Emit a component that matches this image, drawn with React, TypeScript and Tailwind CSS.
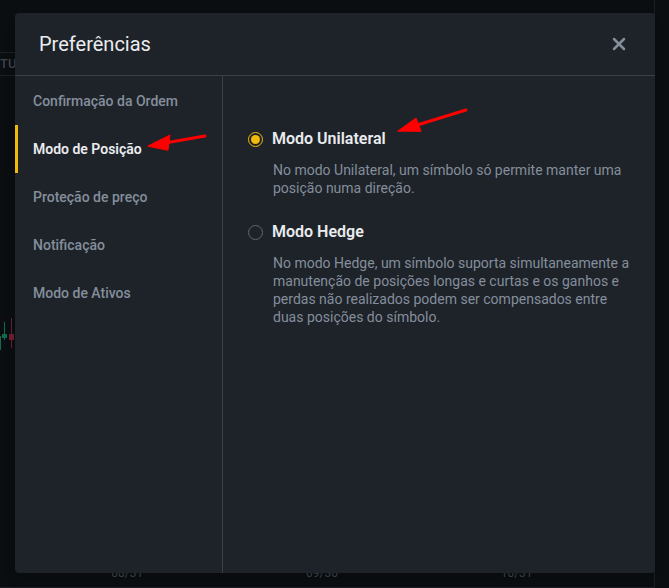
import { X } from "lucide-react";

const menu = [
  "Confirmação da Ordem",
  "Modo de Posição",
  "Proteção de preço",
  "Notificação",
  "Modo de Ativos",
];

function Radio({ checked }: { checked: boolean }) {
  return (
    <span
      className={`flex h-[15px] w-[15px] shrink-0 items-center justify-center rounded-full border-[1.5px] ${
        checked ? "border-[#f0b90b]" : "border-[#5e6673]"
      }`}
    >
      {checked && <span className="h-[9px] w-[9px] rounded-full bg-[#f0b90b]" />}
    </span>
  );
}

function Option({ checked, title, text }: { checked: boolean; title: string; text: string }) {
  return (
    <div>
      <div className="flex items-center gap-[9px]">
        <Radio checked={checked} />
        <span className="text-[16px] font-semibold text-[#eaecef]">{title}</span>
      </div>
      <p className="mt-[10px] pl-[25px] text-[14px] leading-[18px] text-[#848e9c]">{text}</p>
    </div>
  );
}

export default function App() {
  return (
    <div
      className="relative h-[588px] w-[669px] overflow-hidden bg-[#0b0e11]"
      style={{ fontFamily: "Roboto, 'Noto Sans', sans-serif" }}
    >
      {/* page behind the modal */}
      <div className="flex h-full w-[655px] flex-col border-r border-[#1b1f24] border-b">
        <div className="h-[53px] border-b border-[#1b1f24]" />
        <div className="flex h-[23px] items-center border-b border-[#1b1f24] text-[13px] font-medium text-[#3d434b]">
          TU
        </div>
        <div className="flex flex-1 items-start pt-[242px]">
          <svg width="14" height="32" viewBox="0 0 14 32">
            <rect x="0" y="18" width="1" height="14" fill="#0e6b4e" />
            <rect x="4" y="4" width="1" height="18" fill="#0e6b4e" />
            <rect x="2" y="16" width="5" height="4" fill="#0e6b4e" />
            <rect x="11" y="0" width="1" height="30" fill="#6b1f2e" />
            <rect x="9" y="16" width="5" height="6" fill="#6b1f2e" />
          </svg>
        </div>
        <div className="flex h-[20px] justify-around pl-[30px] pr-[40px] text-[12px] leading-[12px] text-[#3d434b]">
          <span>08/31</span>
          <span>09/30</span>
          <span>10/31</span>
        </div>
      </div>

      {/* modal */}
      <div className="absolute left-[15px] top-[13px] flex h-[560px] w-[640px] flex-col rounded-[4px] bg-[#1e2329] shadow-lg">
        <div className="flex h-[63px] shrink-0 items-center justify-between border-b border-[#3b4048] pl-[24px] pr-[26px]">
          <h2 className="text-[20px] font-normal text-[#eaecef]">Preferências</h2>
          <X className="h-[20px] w-[20px] text-[#848e9c]" strokeWidth={3} />
        </div>
        <div className="flex flex-1">
          <div className="w-[208px] shrink-0 border-r border-[#3b4048] pt-[1px]">
            {menu.map((m, i) => (
              <div
                key={m}
                className={`flex h-[48px] items-center border-l-[3px] pl-[15px] text-[14px] ${
                  i === 1
                    ? "border-[#f0b90b] font-semibold text-[#eaecef]"
                    : "border-transparent font-medium text-[#848e9c]"
                }`}
              >
                {m}
              </div>
            ))}
          </div>
          <div className="flex flex-1 flex-col gap-[23px] pl-[25px] pr-[24px] pt-[51px]">
            <Option
              checked
              title="Modo Unilateral"
              text="No modo Unilateral, um símbolo só permite manter uma posição numa direção."
            />
            <Option
              checked={false}
              title="Modo Hedge"
              text="No modo Hedge, um símbolo suporta simultaneamente a manutenção de posições longas e curtas e os ganhos e perdas não realizados podem ser compensados entre duas posições do símbolo."
            />
          </div>
        </div>
      </div>

      {/* annotation arrows */}
      <svg className="pointer-events-none absolute left-0 top-0" width="669" height="588">
        <g fill="#ff0000" stroke="#ff0000" strokeLinecap="round">
          <line x1="205" y1="136" x2="165" y2="143" strokeWidth="3" />
          <polygon points="148,146 170,135 168,150" />
          <line x1="466" y1="110" x2="414" y2="126" strokeWidth="3" />
          <polygon points="398,131 416,118 421,131" />
        </g>
      </svg>
    </div>
  );
}
